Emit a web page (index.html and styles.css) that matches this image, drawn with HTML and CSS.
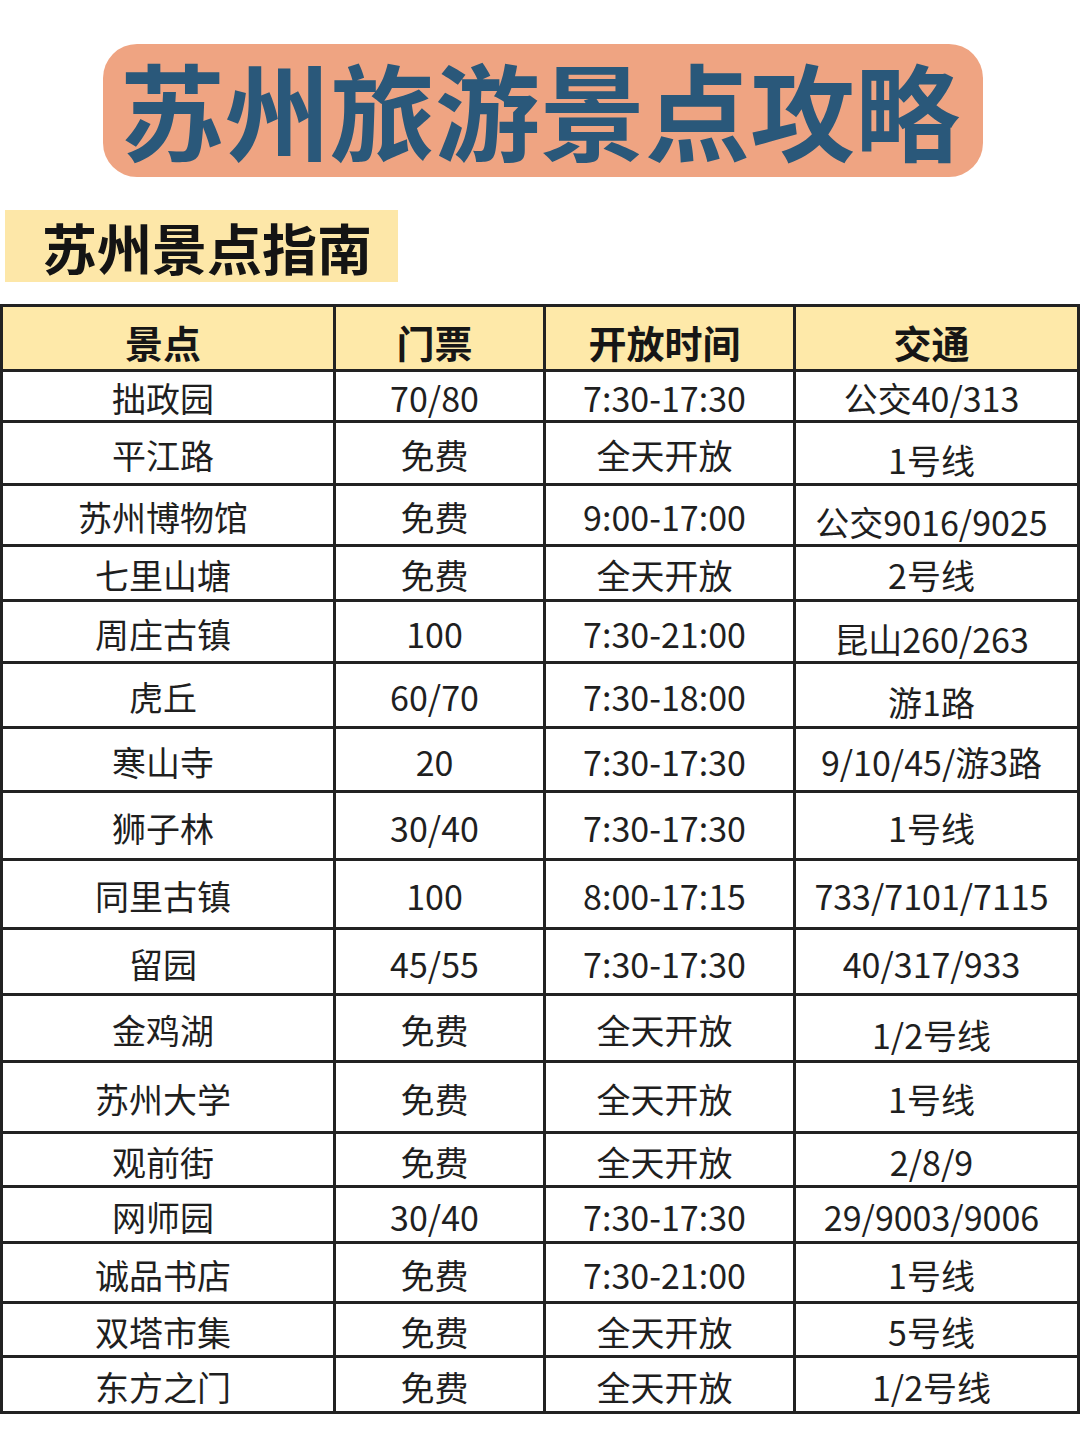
FILE: index.html
```html
<!DOCTYPE html>
<html lang="zh-CN">
<head>
<meta charset="utf-8">
<title>苏州旅游景点攻略</title>
<link rel="stylesheet" href="styles.css">
</head>
<body>
<div class="page">
  <header class="title-box"><h1 class="title">苏州旅游景点攻略</h1></header>
  <div class="sub-box"><h2 class="subtitle">苏州景点指南</h2></div>
  <div class="table">
    <div class="cell head">景点</div><div class="cell head">门票</div><div class="cell head">开放时间</div><div class="cell head">交通</div>
    <div class="cell">拙政园</div><div class="cell">70/80</div><div class="cell">7:30-17:30</div><div class="cell">公交40/313</div>
    <div class="cell">平江路</div><div class="cell">免费</div><div class="cell">全天开放</div><div class="cell low">1号线</div>
    <div class="cell">苏州博物馆</div><div class="cell">免费</div><div class="cell">9:00-17:00</div><div class="cell low">公交9016/9025</div>
    <div class="cell">七里山塘</div><div class="cell">免费</div><div class="cell">全天开放</div><div class="cell">2号线</div>
    <div class="cell">周庄古镇</div><div class="cell">100</div><div class="cell">7:30-21:00</div><div class="cell low">昆山260/263</div>
    <div class="cell">虎丘</div><div class="cell">60/70</div><div class="cell">7:30-18:00</div><div class="cell low">游1路</div>
    <div class="cell">寒山寺</div><div class="cell">20</div><div class="cell">7:30-17:30</div><div class="cell">9/10/45/游3路</div>
    <div class="cell">狮子林</div><div class="cell">30/40</div><div class="cell">7:30-17:30</div><div class="cell">1号线</div>
    <div class="cell">同里古镇</div><div class="cell">100</div><div class="cell">8:00-17:15</div><div class="cell">733/7101/7115</div>
    <div class="cell">留园</div><div class="cell">45/55</div><div class="cell">7:30-17:30</div><div class="cell">40/317/933</div>
    <div class="cell">金鸡湖</div><div class="cell">免费</div><div class="cell">全天开放</div><div class="cell low">1/2号线</div>
    <div class="cell">苏州大学</div><div class="cell">免费</div><div class="cell">全天开放</div><div class="cell">1号线</div>
    <div class="cell">观前街</div><div class="cell">免费</div><div class="cell">全天开放</div><div class="cell">2/8/9</div>
    <div class="cell">网师园</div><div class="cell">30/40</div><div class="cell">7:30-17:30</div><div class="cell">29/9003/9006</div>
    <div class="cell">诚品书店</div><div class="cell">免费</div><div class="cell">7:30-21:00</div><div class="cell">1号线</div>
    <div class="cell">双塔市集</div><div class="cell">免费</div><div class="cell">全天开放</div><div class="cell">5号线</div>
    <div class="cell">东方之门</div><div class="cell">免费</div><div class="cell">全天开放</div><div class="cell">1/2号线</div>
  </div>
</div>
</body>
</html>
```

FILE: styles.css
```css
* { box-sizing: border-box; }
html, body {
  margin: 0;
  padding: 0;
  background: #ffffff;
}
body {
  font-family: "Noto Sans CJK SC", "Noto Sans", sans-serif;
  color: #1f1f1f;
}
.page {
  width: 1080px;
  height: 1440px;
  padding-top: 44px;
}
.title-box {
  margin-left: 103px;
  width: 880px;
  height: 133px;
  background: #efa482;
  border-radius: 34px;
  display: flex;
  align-items: center;
  justify-content: center;
  padding-right: 6px;
}
.title {
  margin: 0;
  font-size: 105px;
  font-weight: 700;
  line-height: 1;
  color: #2a587a;
  letter-spacing: 0;
  transform: translateY(-3px);
}
.sub-box {
  margin-top: 33px;
  margin-left: 5px;
  width: 393px;
  height: 72px;
  background: #fde7a8;
  display: flex;
  align-items: center;
  padding-left: 37px;
}
.subtitle {
  margin: 0;
  font-size: 55px;
  font-weight: 700;
  line-height: 1;
  color: #141414;
}
.table {
  margin-top: 22px;
  width: 1080px;
  display: grid;
  grid-template-columns: 333px 210px 250px 284px;
  grid-template-rows: 65px 51px 63px 61px 55px 62px 65px 64px 68px 69px 66px 67px 71px 54px 56px 60px 54px 56px;
  border-top: 3px solid #222;
  border-left: 3px solid #222;
}
.cell {
  border-right: 3px solid #222;
  border-bottom: 3px solid #222;
  display: flex;
  align-items: center;
  justify-content: center;
  font-size: 34px;
  line-height: 1;
  color: #1f1f1f;
  padding-right: 10px;
  padding-top: 4px;
  white-space: nowrap;
}
.cell.head {
  background: #fee9a9;
  font-size: 38px;
  font-weight: 700;
  color: #161616;
  padding-top: 8px;
}
.cell.low {
  padding-top: 14px;
}
```
